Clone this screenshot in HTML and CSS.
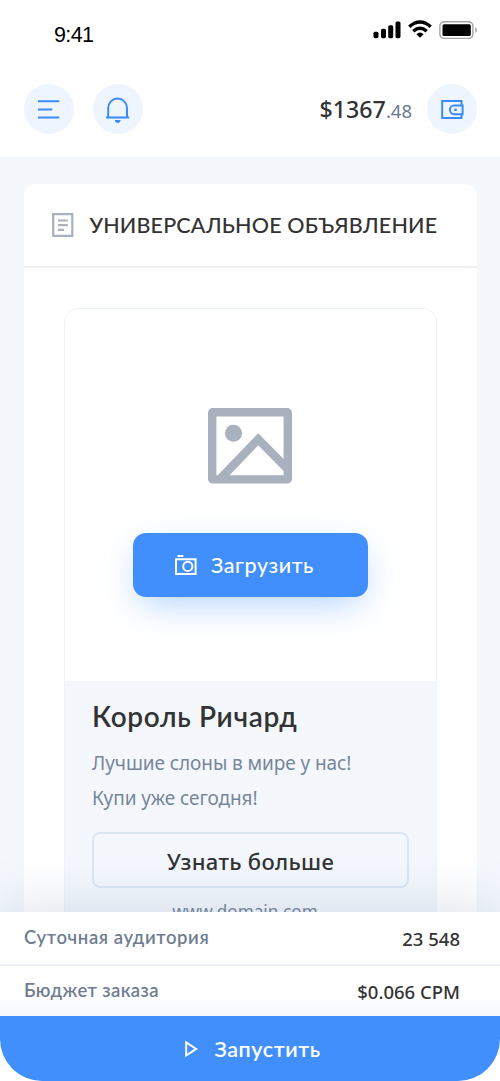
FILE: index.html
```html
<!DOCTYPE html>
<html lang="ru">
<head>
<meta charset="utf-8">
<meta name="viewport" content="width=device-width, initial-scale=1">
<title>Универсальное объявление</title>
<link rel="stylesheet" href="styles.css">
</head>
<body>
<div class="screen">
  <header class="header">
    <div class="status">
      <span class="time">9:41</span>
      <svg class="status-icons" width="106" height="22" viewBox="0 0 106 22">
        <rect x="1.5" y="13.7" width="5" height="6.5" rx="1.6"/>
        <rect x="9" y="10.7" width="5" height="9.5" rx="1.6"/>
        <rect x="16.2" y="7.2" width="5" height="13" rx="1.6"/>
        <rect x="23.5" y="3.5" width="5" height="16.7" rx="1.6"/>
        <g fill="none" stroke="#000" stroke-width="3.4">
          <path d="M37.3 8.8Q48 -.6 58.7 8.8"/>
          <path d="M41.3 13.2Q48 7.4 54.7 13.2"/>
        </g>
        <path d="M44.4 16.2Q48 13 51.6 16.2L48 19.8Z"/>
        <rect x="67.9" y="3.7" width="33" height="16.7" rx="4.3" fill="none" stroke="#a3a3a3" stroke-width="1.4"/>
        <rect x="70.5" y="6.2" width="28.3" height="11.8" rx="1.5"/>
        <path d="M103.300 9Q106.700 12 103.300 15Z" fill="#a3a3a3"/>
      </svg>
    </div>
    <nav class="toolbar">
      <button class="round" aria-label="Меню">
        <svg width="50" height="50" viewBox="0 0 50 50"><path d="M14 17.300H35.300M14 25.500H28.200M14 33.600H35.300"/></svg>
      </button>
      <button class="round" aria-label="Уведомления">
        <svg width="50" height="50" viewBox="0 0 50 50"><path d="M13 33.600H36.200M15.200 33.300V24A9.400 9.400 0 0 1 34 24V33.300"/><path class="solid" d="M21.700 36H27.700Q27.200 38.900 24.700 38.900T21.700 36Z"/></svg>
      </button>
      <div class="balance">$1367<small>.48</small></div>
      <button class="round" aria-label="Кошелёк">
        <svg width="50" height="50" viewBox="0 0 50 50"><path d="M34.500 20.600V17.100H15.200V34.100H34.500V30.600M35.600 21.500H27A4 4.300 0 0 0 27 30.200H35.600Z"/><rect class="solid" x="27.200" y="24.500" width="2.600" height="2.600" rx=".6"/></svg>
      </button>
    </nav>
  </header>

  <main class="content">
    <section class="card">
      <div class="card-head">
        <svg width="22" height="24" viewBox="0 0 22 24"><path d="M1.200 1.200H20.300V22.800H1.200ZM6 7.500H15.800M6 12.100H15.800M6 16.900H12"/></svg>
        <h1>УНИВЕРСАЛЬНОЕ ОБЪЯВЛЕНИЕ</h1>
      </div>
      <article class="preview">
        <div class="media">
          <svg class="picture" width="84" height="76" viewBox="0 0 84 76">
            <rect x="4.200" y="4.200" width="75.600" height="67.200" rx=".5"/>
            <path d="M12 71L50.300 31.200L80 61.500"/>
            <circle cx="25.500" cy="25.300" r="8.500"/>
          </svg>
          <button class="upload">
            <svg width="22" height="21" viewBox="0 0 22 21"><path d="M1 4.300H20.600V19H1ZM2.500 1H8.300"/><circle cx="12.800" cy="11.400" r="4.600"/></svg>
            <span>Загрузить</span>
          </button>
        </div>
        <div class="info">
          <h2>Король Ричард</h2>
          <p>Лучшие слоны в мире у нас!<br>Купи уже сегодня!</p>
          <button class="more">Узнать больше</button>
          <div class="domain">www.domain.com</div>
        </div>
      </article>
    </section>
  </main>

  <footer class="footer">
    <div class="row"><span class="label audience">Суточная аудитория</span><span class="value">23 548</span></div>
    <div class="row budget"><span class="label">Бюджет заказа</span><span class="value">$0.066 CPM</span></div>
    <button class="launch">
      <svg width="14" height="18" viewBox="0 0 14 18"><path d="M1.200 2.300V15.500L11.200 8.900Z"/></svg>
      <span>Запустить</span>
    </button>
  </footer>
</div>
</body>
</html>
```
FILE: styles.css
```css
* { box-sizing: border-box; }
body { margin: 0; background: #fff; font-family: "Noto Sans", "Open Sans", sans-serif; color: #333; }
button { border: 0; padding: 0; font: inherit; }
h1, h2, p { margin: 0; }
svg { display: block; flex: none; }

.screen { width: 500px; height: 1081px; display: flex; flex-direction: column; overflow: hidden; background: #fff; }

.header { height: 157px; flex: none; background: #fff; border-bottom: 1px solid #f9fbfe; }
.status { height: 84px; display: flex; justify-content: space-between; padding: 18px 22px 0 54px; }
.time { font: 21.5px/34px "Liberation Sans", Arial, sans-serif; color: #000; letter-spacing: -.6px; }

.toolbar { display: flex; align-items: center; padding: 0 23px 0 24px; height: 51px; }
.round { width: 50px; height: 50px; border-radius: 50%; background: #eef5fe; margin: -1px 19px 0 0; }
.round:last-child { margin-right: 0; }
.round path { fill: none; stroke: #3a8bfb; stroke-width: 2; }
.round .solid { fill: #3a8bfb; stroke: none; }
.balance { margin-left: auto; margin-right: 15px; padding-top: 1px; font-size: 23.2px; font-weight: 500; line-height: 50px; }
.balance small { font-size: 18.5px; font-weight: 400; color: #6b7a90; }

.content { flex: 1; min-height: 0; overflow: hidden; background: #f4f8fd; padding: 27px 23px 0 24px; }
.card { background: #fff; border-radius: 12px; height: 900px; }
.card-head { height: 84px; display: flex; align-items: center; gap: 15.5px; padding: 0 28px; border-bottom: 2px solid #f0f0f1; }
.card-head path { fill: none; stroke: #a9b1be; stroke-width: 2.2; }
.card-head h1 { font: 500 21.5px/30px Lato, sans-serif; letter-spacing: .17px; white-space: nowrap; }

.preview { margin: 40px 40px 0; border: 1px solid #edf3fa; border-radius: 14px; height: 800px; overflow: hidden; }
.media { height: 372px; display: flex; flex-direction: column; align-items: center; padding-top: 99px; }
.picture { margin-left: -2px; fill: none; stroke: #a9b1be; stroke-width: 8.4; stroke-linejoin: round; }
.picture path { stroke-linejoin: miter; }
.picture circle { fill: #a9b1be; stroke: none; }
.upload { width: 235px; height: 64px; margin-top: 49px; border-radius: 13px; background: #408ffc; color: #fff; display: flex; align-items: center; padding-left: 42px; gap: 14px; box-shadow: 0 12px 36px -8px rgba(64, 143, 252, .45); font: 500 21.5px/30px Lato, sans-serif; letter-spacing: .55px; }
.upload svg { fill: none; stroke: #fff; stroke-width: 2; }

.info { background: #f4f8fd; height: 430px; padding: 15px 27px 0; }
.info h2 { font: 600 28px/40px Lato, sans-serif; letter-spacing: .65px; }
.info p { font-size: 19px; line-height: 35px; letter-spacing: -.08px; color: #77869b; padding-top: 10px; white-space: nowrap; }
.more { display: block; width: 317px; height: 56px; margin-top: 16px; padding-top: 1px; border: 2px solid #dce7f5; border-radius: 8px; background: transparent; color: #333; font-size: 22px; font-weight: 500; letter-spacing: .3px; }
.domain { font-size: 17.2px; line-height: 26px; text-align: center; color: #77869b; margin-top: 11px; padding-right: 11px; }

.footer { flex: none; height: 169px; background: #fff; position: relative; box-shadow: 0 -6px 50px rgba(90, 115, 155, .2); }
.row { height: 54px; display: flex; justify-content: space-between; align-items: center; padding: 0 40px 0 24px; border-bottom: 2px solid #edf0f5; }
.budget { height: 50px; border: 0; background: linear-gradient(#fff 60%, #f5f8fc); }
.label { font: 600 18.5px/28px Lato, sans-serif; letter-spacing: .38px; color: #6f7d92; margin-top: -2px; }
.audience { letter-spacing: .58px; }
.value { font-size: 18.5px; font-weight: 500; }
.launch { width: 100%; height: 65px; display: flex; align-items: center; justify-content: center; gap: 15px; padding-left: 6px; background: #408ffc; color: #fff; border-radius: 0 0 42px 42px; font: 600 21.5px/30px Lato, sans-serif; letter-spacing: .55px; }
.launch svg { fill: none; stroke: #fff; stroke-width: 2; }
```
